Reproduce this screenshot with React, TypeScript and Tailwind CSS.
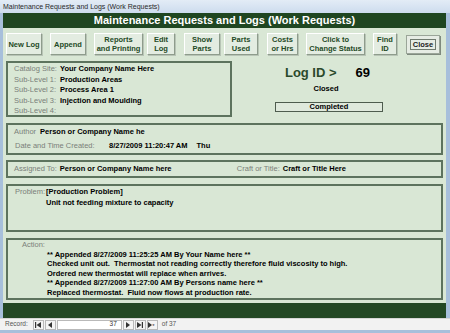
import React from 'react';

const FONT = "font-['Liberation_Sans',Arial,sans-serif]";

type Btn = { label: string[]; w: string; ml: string };

const buttons: Btn[] = [
  { label: ['New Log'], w: 'w-[36px]', ml: 'ml-0' },
  { label: ['Append'], w: 'w-[36px]', ml: 'ml-[8px]' },
  { label: ['Reports', 'and Printing'], w: 'w-[49px]', ml: 'ml-[8px]' },
  { label: ['Edit', 'Log'], w: 'w-[28px]', ml: 'ml-[4px]' },
  { label: ['Show', 'Parts'], w: 'w-[36px]', ml: 'ml-[9px]' },
  { label: ['Parts', 'Used'], w: 'w-[34px]', ml: 'ml-[4px]' },
  { label: ['Costs', 'or Hrs'], w: 'w-[31px]', ml: 'ml-[9px]' },
  { label: ['Click to', 'Change Status'], w: 'w-[59px]', ml: 'ml-[8px]' },
  { label: ['Find', 'ID'], w: 'w-[24px]', ml: 'ml-[8px]' },
];

const catalog = [
  ['Catalog Site:', 'Your Company Name Here'],
  ['Sub-Level 1:', 'Production Areas'],
  ['Sub-Level 2:', 'Process Area 1'],
  ['Sub-Level 3:', 'Injection and Moulding'],
  ['Sub-Level 4:', ''],
];

const actions = [
  '** Appended 8/27/2009 11:25:25 AM By Your Name here **',
  'Checked unit out.  Thermostat not reading correctly therefore fluid viscosity to high.',
  'Ordered new thermostat will replace when arrives.',
  '** Appended 8/27/2009 11:27:00 AM By Persons name here **',
  'Replaced thermostat.  Fluid now flows at production rate.',
];

const panel = 'border-2 border-[#5d735e] bg-[#d9e7d5]';
const label = 'text-[#7a7f7a] font-normal';

function NavBtn({ children }: { children: React.ReactNode }) {
  return (
    <div className="w-[11px] h-[10px] flex items-center justify-center border border-[#b9b9b9] bg-[#f4f4f4]">
      <svg width="8" height="6" viewBox="0 0 8 6">{children}</svg>
    </div>
  );
}

export default function App() {
  return (
    <div className={`${FONT} w-[450px] h-[333px] overflow-hidden bg-[#a7bfdb] flex flex-col`}>
      {/* window title bar */}
      <div className="h-[13px] bg-gradient-to-b from-[#e3ecf6] to-[#cddcee] flex items-center pl-[3px] text-[7px] text-[#2a2a2a] leading-none">
        Maintenance Requests and Logs (Work Requests)
      </div>

      <div className="flex-1 flex flex-col pl-[3px] pr-[4px]">
        {/* form header */}
        <div className="h-[15px] bg-[#1f4621] text-white font-bold text-[11px] leading-none flex items-center justify-center">
          Maintenance Requests and Logs (Work Requests)
        </div>

        <div className="h-[275px] bg-[#d9e7d5] px-[3px] flex flex-col text-[7.5px] leading-[10.5px] font-bold text-black">
          {/* button row */}
          <div className="flex items-start mt-[5px]">
            {buttons.map((b) => (
              <div
                key={b.label.join()}
                className={`${b.w} ${b.ml} h-[22px] flex flex-col items-center justify-center text-center text-[#244a26] leading-[9px] bg-[#e3ece1] border border-t-white border-l-white border-b-[#8e9c8c] border-r-[#8e9c8c] shadow-[1px_1px_0_#b8c4b6]`}
              >
                {b.label.map((l) => (
                  <span key={l} className="whitespace-nowrap">{l}</span>
                ))}
              </div>
            ))}
            <div className="ml-[9px] mt-[2px] w-[34px] h-[19px] flex items-center justify-center bg-[#e6ece4] border border-[#9aa598] shadow-[1px_1px_0_#7f8a7e]">
              <span className="border border-[#6f7a6e] px-[2px] leading-[9px] text-[#222]">Close</span>
            </div>
          </div>

          {/* catalog + log id */}
          <div className="flex mt-[6px]">
            <div className={`${panel} w-[226px] h-[56px] pl-[6px] pt-[1px]`}>
              {catalog.map(([k, v]) => (
                <div key={k} className="flex whitespace-nowrap">
                  <span className={`${label} w-[46px]`}>{k}</span>
                  <span>{v}</span>
                </div>
              ))}
            </div>
            <div className="ml-[43px] w-[108px] flex flex-col items-center">
              <div className="flex items-baseline mt-[4px] text-[13px] leading-[16px] whitespace-nowrap">
                <span className="text-[#2b4a2c] ml-[-3px]">Log ID &gt;</span>
                <span className="ml-[19px]">69</span>
              </div>
              <div className="mt-[3px] ml-[-6px] leading-[10px]">Closed</div>
              <div className="mt-[8px] w-[108px] h-[10px] border border-[#4e5c4e] bg-[#dfe9dc] flex items-center justify-center leading-none">
                Completed
              </div>
            </div>
          </div>

          {/* author */}
          <div className={`${panel} h-[32px] mt-[6px] pl-[6px] pt-[2px] whitespace-nowrap`}>
            <div className="flex">
              <span className={label}>Author</span>
              <span className="ml-[4px]">Person or Company Name he</span>
            </div>
            <div className="flex mt-[3px]">
              <span className={`${label} w-[94px] ml-[1px]`}>Date and Time Created:</span>
              <span>8/27/2009 11:20:47 AM</span>
              <span className="ml-[9px]">Thu</span>
            </div>
          </div>

          {/* assigned */}
          <div className={`${panel} h-[18px] mt-[5px] pl-[6px] flex items-center whitespace-nowrap`}>
            <span className={label}>Assigned To:</span>
            <span className="ml-[3px] w-[177px]">Person or Company Name here</span>
            <span className={label}>Craft or Title:</span>
            <span className="ml-[3px]">Craft or Title Here</span>
          </div>

          {/* problem */}
          <div className={`${panel} h-[48px] mt-[6px] pl-[7px] pt-[1px] flex whitespace-nowrap`}>
            <span className={`${label} w-[31px]`}>Problem:</span>
            <div className="flex flex-col">
              <span>[Production Problem]</span>
              <span>Unit not feeding mixture to capacity</span>
            </div>
          </div>

          {/* action */}
          <div className={`${panel} h-[62px] mt-[6px] pl-[14px] whitespace-pre leading-[9.5px]`}>
            <div className={label}>Action:</div>
            <div className="pl-[25px]">
              {actions.map((a) => (
                <div key={a}>{a}</div>
              ))}
            </div>
          </div>
        </div>

        {/* form footer */}
        <div className="h-[15px] bg-[#234824]" />
      </div>

      {/* record navigation */}
      <div className="h-[12px] bg-[#f2f2f2] flex items-center pl-[5px] text-[6.5px] text-[#555] leading-none gap-[1px] border-t border-[#d6d6d6]">
        <span className="mr-[4px]">Record:</span>
        <NavBtn>
          <rect x="1" y="0" width="1.2" height="6" fill="#333" />
          <polygon points="7,0 2.5,3 7,6" fill="#333" />
        </NavBtn>
        <NavBtn>
          <polygon points="6,0 2,3 6,6" fill="#333" />
        </NavBtn>
        <div className="w-[65px] h-[10px] bg-white border border-[#b9b9b9] flex items-center justify-end pr-[4px] text-[#333]">
          37
        </div>
        <NavBtn>
          <polygon points="2,0 6,3 2,6" fill="#333" />
        </NavBtn>
        <NavBtn>
          <polygon points="1,0 5.5,3 1,6" fill="#333" />
          <rect x="5.8" y="0" width="1.2" height="6" fill="#333" />
        </NavBtn>
        <NavBtn>
          <polygon points="0,0 4,3 0,6" fill="#333" />
          <text x="4.2" y="5.5" fontSize="6" fill="#333">*</text>
        </NavBtn>
        <span className="ml-[3px]">of 37</span>
      </div>
      <div className="h-[3px] bg-[#a7bfdb]" />
    </div>
  );
}
